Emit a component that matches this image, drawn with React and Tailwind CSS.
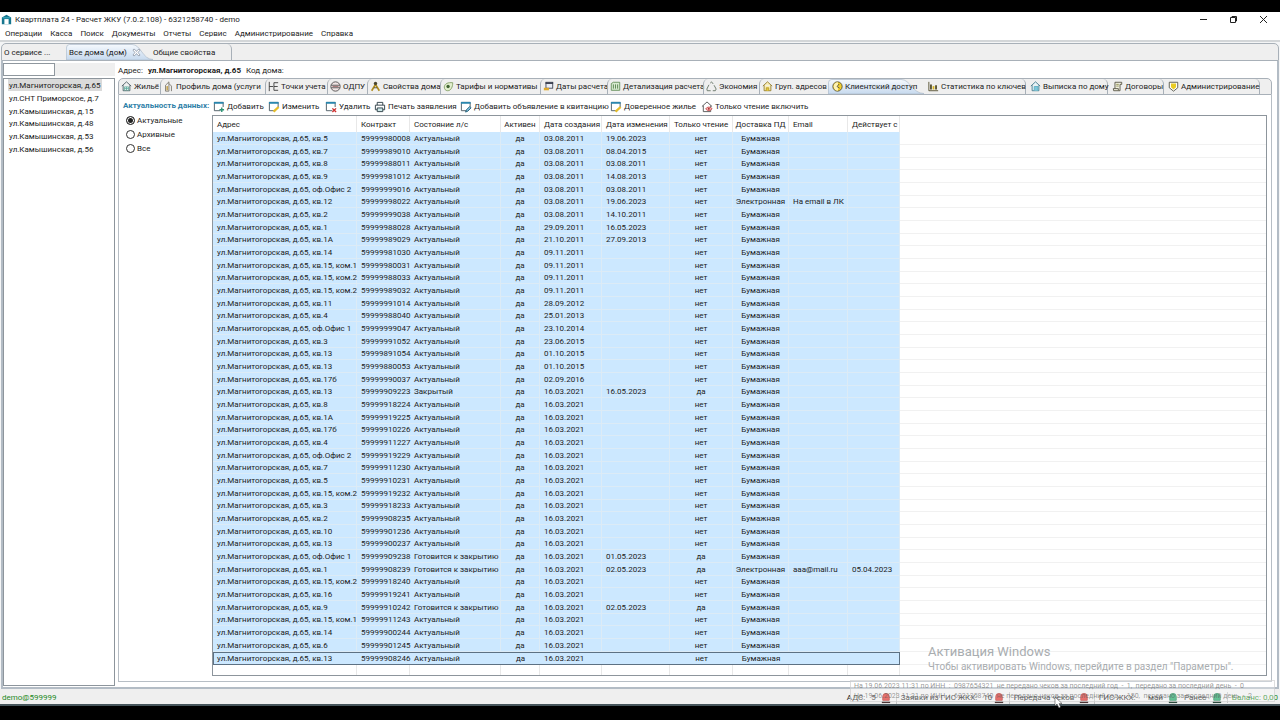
import React, { useState } from 'react';
import clsx from 'clsx';

const MENU = ['Операции', 'Касса', 'Поиск', 'Документы', 'Отчеты', 'Сервис', 'Администрирование', 'Справка'];

const HOUSES = [
  'ул.Магнитогорская, д.65',
  'ул.СНТ Приморское, д.7',
  'ул.Камышинская, д.15',
  'ул.Камышинская, д.48',
  'ул.Камышинская, д.53',
  'ул.Камышинская, д.56',
];

const TABS = [
  { icon: 'home', label: 'Жильё', width: 'w-[41px]' },
  { icon: 'profile', label: 'Профиль дома (услуги', width: 'w-[105px]' },
  { icon: 'meter', label: 'Точки учета', width: 'w-[62px]' },
  { icon: 'odpu', label: 'ОДПУ', width: 'w-[40px]' },
  { icon: 'props', label: 'Свойства дома', width: 'w-[73px]' },
  { icon: 'tag', label: 'Тарифы и нормативы', width: 'w-[100px]' },
  { icon: 'dates', label: 'Даты расчета', width: 'w-[67px]' },
  { icon: 'detail', label: 'Детализация расчета', width: 'w-[96px]' },
  { icon: 'eco', label: 'Экономия', width: 'w-[56px]' },
  { icon: 'group', label: 'Груп. адресов', width: 'w-[69px]' },
  { icon: 'client', label: 'Клиентский доступ', width: 'w-[96px]' },
  { icon: 'stats', label: 'Статистика по ключев', width: 'w-[102px]' },
  { icon: 'extract', label: 'Выписка по дому', width: 'w-[82px]' },
  { icon: 'scroll', label: 'Договоры', width: 'w-[56px]' },
  { icon: 'shield', label: 'Администрирование', width: 'w-[96px]' },
];
const ACTIVE_TAB = 10;

const ACTIONS = [
  { icon: 'add', label: 'Добавить', width: 'w-[55px]' },
  { icon: 'edit', label: 'Изменить', width: 'w-[57px]' },
  { icon: 'remove', label: 'Удалить', width: 'w-[49px]' },
  { icon: 'print', label: 'Печать заявления', width: 'w-[86px]' },
  { icon: 'note', label: 'Добавить объявление в квитанцию', width: 'w-[150px]' },
  { icon: 'edit', label: 'Доверенное жилье', width: 'w-[91px]' },
  { icon: 'readonly', label: 'Только чтение включить', width: 'w-[120px]' },
];

const COLUMNS = [
  { title: 'Адрес', width: 'w-[144px]' },
  { title: 'Контракт', width: 'w-[53px]' },
  { title: 'Состояние л/с', width: 'w-[91px]' },
  { title: 'Активен', width: 'w-[39px]', center: true },
  { title: 'Дата создания', width: 'w-[62px]' },
  { title: 'Дата изменения', width: 'w-[68px]' },
  { title: 'Только чтение', width: 'w-[63px]', center: true },
  { title: 'Доставка ПД', width: 'w-[56px]', center: true },
  { title: 'Email', width: 'w-[59px]' },
  { title: 'Действует с', width: 'w-[52px]' },
];

// flat, contract, created, changed, then whatever differs from the usual account
const ACCOUNTS = [
  ['кв.5', '59999980008', '03.08.2011', '19.06.2023'],
  ['кв.7', '59999989010', '03.08.2011', '08.04.2015'],
  ['кв.8', '59999988011', '03.08.2011', '03.08.2011'],
  ['кв.9', '59999981012', '03.08.2011', '14.08.2013'],
  ['оф.Офис 2', '59999999016', '03.08.2011', '03.08.2011'],
  ['кв.12', '59999998022', '03.08.2011', '19.06.2023', { delivery: 'Электронная', email: 'На email в ЛК' }],
  ['кв.2', '59999999038', '03.08.2011', '14.10.2011'],
  ['кв.1', '59999988028', '29.09.2011', '16.05.2023'],
  ['кв.1А', '59999989029', '21.10.2011', '27.09.2013'],
  ['кв.14', '59999981030', '09.11.2011', ''],
  ['кв.15, ком.1', '59999980031', '09.11.2011', ''],
  ['кв.15, ком.2', '59999988033', '09.11.2011', ''],
  ['кв.15, ком.2', '59999989032', '09.11.2011', ''],
  ['кв.11', '59999991014', '28.09.2012', ''],
  ['кв.4', '59999988040', '25.01.2013', ''],
  ['оф.Офис 1', '59999999047', '23.10.2014', ''],
  ['кв.3', '59999991052', '23.06.2015', ''],
  ['кв.13', '59999891054', '01.10.2015', ''],
  ['кв.13', '59999880053', '01.10.2015', ''],
  ['кв.17б', '59999990037', '02.09.2016', ''],
  ['кв.13', '59999909223', '16.03.2021', '16.05.2023', { state: 'Закрытый', readOnly: 'да' }],
  ['кв.8', '59999918224', '16.03.2021', ''],
  ['кв.1А', '59999919225', '16.03.2021', ''],
  ['кв.17б', '59999910226', '16.03.2021', ''],
  ['кв.4', '59999911227', '16.03.2021', ''],
  ['оф.Офис 2', '59999919229', '16.03.2021', ''],
  ['кв.7', '59999911230', '16.03.2021', ''],
  ['кв.5', '59999910231', '16.03.2021', ''],
  ['кв.15, ком.2', '59999919232', '16.03.2021', ''],
  ['кв.3', '59999918233', '16.03.2021', ''],
  ['кв.2', '59999908235', '16.03.2021', ''],
  ['кв.10', '59999901236', '16.03.2021', ''],
  ['кв.13', '59999900237', '16.03.2021', ''],
  ['оф.Офис 1', '59999909238', '16.03.2021', '01.05.2023', { state: 'Готовится к закрытию', readOnly: 'да' }],
  ['кв.1', '59999908239', '16.03.2021', '02.05.2023', { state: 'Готовится к закрытию', readOnly: 'да', delivery: 'Электронная', email: 'aaa@mail.ru', from: '05.04.2023' }],
  ['кв.15, ком.2', '59999918240', '16.03.2021', ''],
  ['кв.16', '59999919241', '16.03.2021', ''],
  ['кв.9', '59999910242', '16.03.2021', '02.05.2023', { state: 'Готовится к закрытию', readOnly: 'да' }],
  ['кв.15, ком.1', '59999911243', '16.03.2021', ''],
  ['кв.14', '59999900244', '16.03.2021', ''],
  ['кв.6', '59999901245', '16.03.2021', ''],
  ['кв.13', '59999908246', '16.03.2021', ''],
];

const toCells = ([flat, contract, created, changed, extra = {}]) => [
  `ул.Магнитогорская, д.65, ${flat}`,
  contract,
  extra.state || 'Актуальный',
  'да',
  created,
  changed,
  extra.readOnly || 'нет',
  extra.delivery || 'Бумажная',
  extra.email || '',
  extra.from || '',
];

const sheet = (
  <>
    <path d="M8 10.500H1.500V1.500H11v5" fill="#fff" stroke="#4b5a63" />
    <path d="M1 2h10.500" stroke="#2a86ad" strokeWidth="2" />
  </>
);

const house = 'M1 6 6.500 1 12 6M2.500 5v6.500h8V5';

const ICONS = {
  logo: (
    <>
      <path d="M1 4 6.500 1 12 4v8H1Z" fill="#16768f" />
      <path d="M4 12V6h5v6" fill="#fff" />
      <path d="M2 4.500h9" stroke="#4fc0cf" />
    </>
  ),
  home: (
    <>
      <path d={house} stroke="#45565c" />
      <path d="M4 11.500V7h5v4.500M6.500 7v4.500M4 9h5" stroke="#5fae9f" />
    </>
  ),
  profile: (
    <>
      <path d="M3 12V5l4-4v11ZM7 3l3 3v6" stroke="#77736a" />
      <path d="M5 6v5" stroke="#c8a857" strokeWidth="2" />
    </>
  ),
  meter: <path d="M1.500 1v11M1.500 6.500H6M12 2H7v9h5M7 6.500h4.500" stroke="#333" />,
  odpu: (
    <>
      <circle cx="6.500" cy="6.500" r="5.500" fill="#f2e6e6" stroke="#444" />
      <path d="M1.500 5h10M1.500 8h10" stroke="#444" />
      <path d="M3 6.500h7" stroke="#a06a6a" />
    </>
  ),
  props: (
    <>
      <path d="M6.500 4 2 11.500M6.500 4l4.500 7.500" stroke="#b08d1e" strokeWidth="2" />
      <circle cx="6.500" cy="3" r="2" fill="#4a4630" />
      <path d="M4.500 8h4" stroke="#4a4630" />
    </>
  ),
  tag: (
    <>
      <path d="M1.500 7C2 3 6 1.500 11.500 2c0 5-2 9.500-6 9.500-2.500 0-4-2-4-4.500Z" fill="#e2efcf" stroke="#7c9a5e" />
      <circle cx="6" cy="6.500" r="2" fill="#3f6332" />
    </>
  ),
  dates: (
    <>
      <rect x="3.500" y="1.500" width="8" height="7" fill="#e9edf5" stroke="#3a3f50" />
      <path d="M3 2.500h9" stroke="#3a3f50" strokeWidth="2" />
      <path d="M1 9.500h6" stroke="#e0a92b" strokeWidth="3" />
    </>
  ),
  detail: (
    <>
      <path d="M1.500 11V3L4 1.500h7.500V11Z" fill="#d8ead0" stroke="#5d8a52" />
      <path d="M4 4v5M6.500 4v5M9 4v5" stroke="#4b7a42" />
    </>
  ),
  eco: (
    <path d="M5 2.500 6.500 1l2 2.500M9.500 5l2.500 4.500-1 2H8M5.500 11.500H1.500L1 9.500l2.500-5" stroke="#5b6b5b" />
  ),
  group: (
    <>
      <path d={house} fill="#f9edb5" stroke="#8e7725" />
      <path d="M5 11.500V8h3v3.500" fill="#e8c83a" stroke="#b59a25" />
    </>
  ),
  client: (
    <>
      <circle cx="6.500" cy="6.500" r="5.500" fill="#f3cf2e" stroke="#4c4a36" />
      <path d="M7 1.500a5 5 0 0 0 0 10Z" fill="#fdf3b4" />
      <path d="M8.500 3.500 6 6.500l3 2" stroke="#4c4a36" />
    </>
  ),
  stats: (
    <>
      <path d="M1 1v10.500h11" stroke="#4a4420" />
      <path d="M3.500 4v6M9.500 5v5" stroke="#4a4420" strokeWidth="2" />
      <path d="M6.500 6v4" stroke="#d9b61c" strokeWidth="2" />
    </>
  ),
  extract: (
    <>
      <path d={house} fill="#e6f4f8" stroke="#3d7284" />
      <path d="M5 11.500V6.500h4.500v5" fill="#7fc7d9" stroke="#5badc2" />
    </>
  ),
  scroll: (
    <>
      <path d="M3.500 9V1.500h8V4H9.500v7.500H2L1.500 9H7.500v2" fill="#f0efdf" stroke="#4f4c3d" />
      <path d="M5 4h3M5 6h3" stroke="#8a8b4a" />
    </>
  ),
  shield: (
    <>
      <path d="M1.500 1.500h10V8L6.500 12 1.500 8Z" fill="#fff" stroke="#4b4b3c" />
      <path d="M3.500 3h6v4.500l-3 2.500-3-2.500Z" fill="#e9cb24" />
    </>
  ),
  add: (
    <>
      {sheet}
      <path d="M9.500 7v5M7 9.500h5" stroke="#2c9174" strokeWidth="1.500" />
    </>
  ),
  edit: (
    <>
      {sheet}
      <path d="m6 11.500 5.500-5" stroke="#e5bd29" strokeWidth="2.500" />
    </>
  ),
  remove: (
    <>
      {sheet}
      <path d="m8 8 4 4M12 8l-4 4" stroke="#cf3030" strokeWidth="1.500" />
    </>
  ),
  note: (
    <>
      {sheet}
      <path d="m6 12 1-2.500L10.500 6 12 7.500 8.500 11Z" fill="#7fc0dc" stroke="#27637c" />
    </>
  ),
  print: (
    <>
      <path d="M3.500 4.500v-3h6v3M3.500 9.500h-2v-5h10v5h-2" stroke="#2e3f45" />
      <path d="M3.500 7.500h6v4h-6Z" fill="#cde9ea" stroke="#2e3f45" />
    </>
  ),
  readonly: (
    <>
      <path d={house} stroke="#555" />
      <path d="M5 8.500c2-2.500 5-2.500 7 0-2 2.500-5 2.500-7 0Z" fill="#f4b5b5" stroke="#c94a4a" />
      <circle cx="8.500" cy="8.500" r="1" fill="#a82222" />
    </>
  ),
  close: <path d="M2 2h2l2.500 3L9 2h2v2L8.500 6.500 11 9v2H9L6.500 8 4 11H2V9l2.500-2.500L2 4Z" fill="#fff" stroke="#7d8595" />,
  alarmRed: (
    <>
      <path d="M3 9V5a3.500 3.500 0 0 1 7 0v4Z" fill="#e0332e" stroke="#b02a26" />
      <path d="M2 11h9" stroke="#4a3434" strokeWidth="2" />
    </>
  ),
  alarmGreen: (
    <>
      <path d="M3 9V5a3.500 3.500 0 0 1 7 0v4Z" fill="#1fa868" stroke="#1b8453" />
      <path d="M2 11h9" stroke="#2c4a3d" strokeWidth="2" />
    </>
  ),
};

const Icon = ({ name, className = 'size-[12px]' }) => (
  <svg viewBox="0 0 13 13" fill="none" className={clsx('shrink-0', className)} aria-hidden="true">
    {ICONS[name]}
  </svg>
);

// Eclipse style tab: square on the left, sliding away on the right
const ActiveShape = () => (
  <svg viewBox="0 0 100 16" preserveAspectRatio="none" className="absolute inset-0 h-full w-full" aria-hidden="true">
    <defs>
      <linearGradient id="tabFill" x1="0" y1="0" x2="0" y2="1">
        <stop offset="0" stopColor="#f5f9fd" />
        <stop offset="1" stopColor="#c6d9ee" />
      </linearGradient>
    </defs>
    <path d="M0.500 16V4Q0.500 0.500 4 0.500H76C86 0.500 88 15.500 100 15.500V16Z" fill="url(#tabFill)" stroke="#a9b8c9" strokeWidth="0.700" />
  </svg>
);

const TitleBar = () => (
  <header className="bg-white">
    <div className="flex h-[15px] items-center justify-between">
      <h1 className="flex items-center gap-[3px] pl-px text-[8px] font-normal">
        <Icon name="logo" className="size-[11px]" />
        Квартплата 24 - Расчет ЖКУ (7.0.2.108) - 6321258740 - demo
      </h1>
      <div className="flex pr-[2px]">
        <button aria-label="Свернуть" className="flex h-[14px] w-[30px] items-center justify-center">
          <svg viewBox="0 0 9 9" fill="none" stroke="#222" className="size-[9px]"><path d="M1 4.500h7" /></svg>
        </button>
        <button aria-label="Восстановить" className="flex h-[14px] w-[30px] items-center justify-center">
          <svg viewBox="0 0 9 9" fill="none" stroke="#222" className="size-[9px]"><path d="M1.500 2.500h5v5h-5ZM3 2.500v-1h4.500V6H6.500" /></svg>
        </button>
        <button aria-label="Закрыть" className="flex h-[14px] w-[30px] items-center justify-center">
          <svg viewBox="0 0 9 9" fill="none" stroke="#222" className="size-[9px]"><path d="m1 1 7 7M8 1 1 8" /></svg>
        </button>
      </div>
    </div>
    <nav className="flex h-[15px] items-center gap-[8px] border-b-2 border-[#d3d6d8] pl-[5px]">
      {MENU.map((item) => (
        <button key={item}>{item}</button>
      ))}
    </nav>
  </header>
);

const EditorTabs = () => (
  <div className="flex h-[18px] items-stretch rounded-t-[5px] border border-[#a8b0b8] bg-[#efefef]" role="tablist">
    <button role="tab" className="w-[64px] pl-[2px] text-left">О сервисе ...</button>
    <button role="tab" aria-selected="true" className="relative w-[87px] text-left">
      <ActiveShape />
      <span className="relative flex items-center gap-[5px] pl-[3px]">
        Все дома (дом)
        <Icon name="close" className="size-[9px]" />
      </span>
    </button>
    <button role="tab" className="w-[79px] rounded-tr-[5px] border-r border-[#a8b0b8] text-left">Общие свойства</button>
  </div>
);

const HouseList = () => (
  <aside className="flex w-[112px] shrink-0 flex-col gap-[2px]">
    <div className="flex h-[13px] bg-[#efefef]">
      <input aria-label="Поиск дома" className="w-[52px] border border-[#8f979e] bg-white px-1 outline-none" />
    </div>
    <ul className="flex-1 border border-[#8d959c] bg-white pl-[4px]">
      {HOUSES.map((name, i) => (
        <li key={name} className="h-[13px] nth-[3n]:h-[12px]">
          <button className={clsx('flex h-[12px] items-center px-px', i === 0 && 'bg-[#dadada]')}>{name}</button>
        </li>
      ))}
    </ul>
  </aside>
);

const HouseTabs = () => (
  <div className="flex h-[17px] shrink-0 items-stretch rounded-t-[5px] border border-[#a8b0b8] bg-[#efefef]" role="tablist">
    {TABS.map((tab, i) => (
      <button
        key={tab.label}
        role="tab"
        aria-selected={i === ACTIVE_TAB}
        className={clsx(
          'relative whitespace-nowrap border-[#a8b0b8]',
          tab.width,
          i > 0 && i < ACTIVE_TAB && 'rounded-tl-[5px] border-l',
          i > ACTIVE_TAB && 'rounded-tr-[5px] border-r'
        )}
      >
        {i === ACTIVE_TAB && <ActiveShape />}
        <span className={clsx('relative flex items-center gap-[2px]', i >= ACTIVE_TAB ? 'pl-[4px]' : 'pl-[2px]')}>
          <Icon name={tab.icon} className="size-[11px]" />
          {tab.label}
        </span>
      </button>
    ))}
  </div>
);

const Filter = () => {
  const [value, setValue] = useState('Актуальные');

  return (
    <fieldset className="w-[93px] min-w-0 shrink-0 pl-[4px]">
      <legend className="h-[18px] pt-[5px] font-bold whitespace-nowrap text-[#2f7fa8]">Актуальность данных:</legend>
      {['Актуальные', 'Архивные', 'Все'].map((item) => (
        <label key={item} className="flex h-[14px] items-center gap-[2px] pl-[3px]">
          <input
            type="radio"
            name="relevance"
            checked={value === item}
            onChange={() => setValue(item)}
            className="size-[9px] appearance-none rounded-full border border-[#333] bg-white checked:bg-[#222] checked:shadow-[inset_0_0_0_1px_#fff]"
          />
          {item}
        </label>
      ))}
    </fieldset>
  );
};

const Toolbar = () => (
  <div className="flex h-[20px] items-center pt-[3px] pl-px">
    {ACTIONS.map((action) => (
      <button key={action.label} className={clsx('flex shrink-0 items-center gap-[2px] whitespace-nowrap', action.width)}>
        <Icon name={action.icon} />
        {action.label}
      </button>
    ))}
  </div>
);

const AccountsTable = () => (
  <div className="min-h-0 flex-1 overflow-hidden border border-[#8d959c] bg-white">
    <table className="w-full table-fixed border-separate border-spacing-0">
      <thead>
        <tr className="h-[16px]">
          {COLUMNS.map((col) => (
            <th
              key={col.title}
              className={clsx('border-r border-[#e8e8e8] p-0 font-normal whitespace-nowrap', col.width, col.center ? 'text-center' : 'pl-[4px] text-left')}
            >
              {col.title}
            </th>
          ))}
          <td />
        </tr>
      </thead>
      <tbody>
        {ACCOUNTS.map((account, row) => {
          const last = row === ACCOUNTS.length - 1;
          return (
            <tr key={account[1]} className="h-[13px] nth-[3n]:h-[12px]">
              {toCells(account).map((cell, i) => (
                <td
                  key={i}
                  className={clsx(
                    'border-b bg-[#cce8ff] p-0 whitespace-nowrap',
                    COLUMNS[i].center && 'text-center',
                    !COLUMNS[i].center && (last && i === 0 ? 'pl-[3px]' : 'pl-[4px]'),
                    last ? 'border-t border-[#5d7183]' : 'border-r border-[#dcebf6]',
                    last && i === 0 && 'border-l',
                    last && i === 9 && 'border-r'
                  )}
                >
                  {cell}
                </td>
              ))}
              <td className="border-b border-[#f1f1f1] p-0" />
            </tr>
          );
        })}
        <tr className="h-[13px]">
          {COLUMNS.map((col) => (
            <td key={col.title} className="border-r border-[#e8e8e8] p-0" />
          ))}
          <td className="p-0" />
        </tr>
      </tbody>
    </table>
  </div>
);

const StatusBar = () => (
  <footer className="relative flex h-[17px] shrink-0 items-center justify-between border-b-2 border-[#46555b] bg-[#efefef] pt-[2px] pr-[2px] pl-[2px]">
    <span className="text-[#258a25]">demo@599999</span>
    <div className="flex items-center whitespace-nowrap">
      <span className="flex w-[49px] items-center justify-between pr-[4px]">АДС: &nbsp; 5 <Icon name="alarmRed" /></span>
      <span className="flex w-[113px] items-center justify-between border-l border-[#c5c5c5] pr-[4px] pl-[4px]">Заявки из ГИС ЖКХ: &nbsp; 10 <Icon name="alarmRed" /></span>
      <span className="flex w-[85px] items-center justify-between border-l border-[#c5c5c5] pr-[4px] pl-[4px]">Передача чеков <Icon name="alarmRed" /></span>
      <span className="flex w-[133px] items-center justify-between border-l border-[#c5c5c5] pr-[4px] pl-[4px]">
        ГИС ЖКХ: <span className="pl-[8px]">май</span> <Icon name="alarmGreen" /> <span>Ранее</span> <Icon name="alarmGreen" />
      </span>
      <span className="border-l border-[#c5c5c5] pl-[4px] text-[#258a25]">Баланс: 0,00</span>
    </div>

    {/* fading notification about receipts */}
    <div className="absolute right-[5px] bottom-[2px] w-[425px] border border-[#c8c8c8]/60 bg-white/30 pl-[3px] text-[7px] leading-[10px] whitespace-nowrap text-[#555]/60">
      <p>На 19.06.2023 11:31 по ИНН&nbsp; :&nbsp; 0987654321&nbsp; не передано чеков за последний год&nbsp; -&nbsp; 1,&nbsp; передано за последний день&nbsp; -&nbsp; 0</p>
      <p>На 19.06.2023 11:31 по ИНН&nbsp; :&nbsp; 6321258740&nbsp; не передано чеков за последний год&nbsp; -&nbsp; 150,&nbsp; передано за последний день&nbsp; -&nbsp; 2</p>
    </div>
    <svg viewBox="0 0 8 12" className="absolute right-[218px] -bottom-[5px] h-[12px] w-[8px]" aria-hidden="true">
      <path d="M1 0v9l2-2 2 4 1.500-1L5 6.500h3Z" fill="#fff" stroke="#333" strokeWidth="0.500" />
    </svg>
  </footer>
);

const App = () => (
  <div className="flex h-screen flex-col bg-black pt-[12px] pb-[14px] font-['Roboto','Open_Sans',sans-serif] text-[8px] leading-[11px] text-[#1c1c1c]">
    <TitleBar />
    <div className="relative flex min-h-0 flex-1 flex-col bg-[#f4f5f6] px-px pt-px">
      <EditorTabs />
      <main className="flex min-h-0 flex-1 gap-[3px] border-x-2 border-b-2 border-[#b3bcc5] bg-white pt-[2px] pr-[5px] pb-px">
        <HouseList />
        <section className="flex min-w-0 flex-1 flex-col">
          <p className="flex h-[15px] items-center gap-[5px]">
            Адрес: <b>ул.Магнитогорская, д.65</b> Код дома:
          </p>
          <HouseTabs />
          <div className="flex min-h-0 flex-1 border-x border-b border-[#b7bec5] pr-[4px] pb-[5px]">
            <Filter />
            <div className="flex min-w-0 flex-1 flex-col">
              <Toolbar />
              <AccountsTable />
            </div>
          </div>
          <div className="h-[4px] shrink-0" />
        </section>
      </main>
      <div className="pointer-events-none absolute right-[49px] bottom-[15px] w-[303px] whitespace-nowrap text-[#a9adb0]">
        <p className="text-[13px] leading-[16px]">Активация Windows</p>
        <p className="text-[10px] leading-[14px]">Чтобы активировать Windows, перейдите в раздел "Параметры".</p>
      </div>
    </div>
    <StatusBar />
  </div>
);

export default App;
